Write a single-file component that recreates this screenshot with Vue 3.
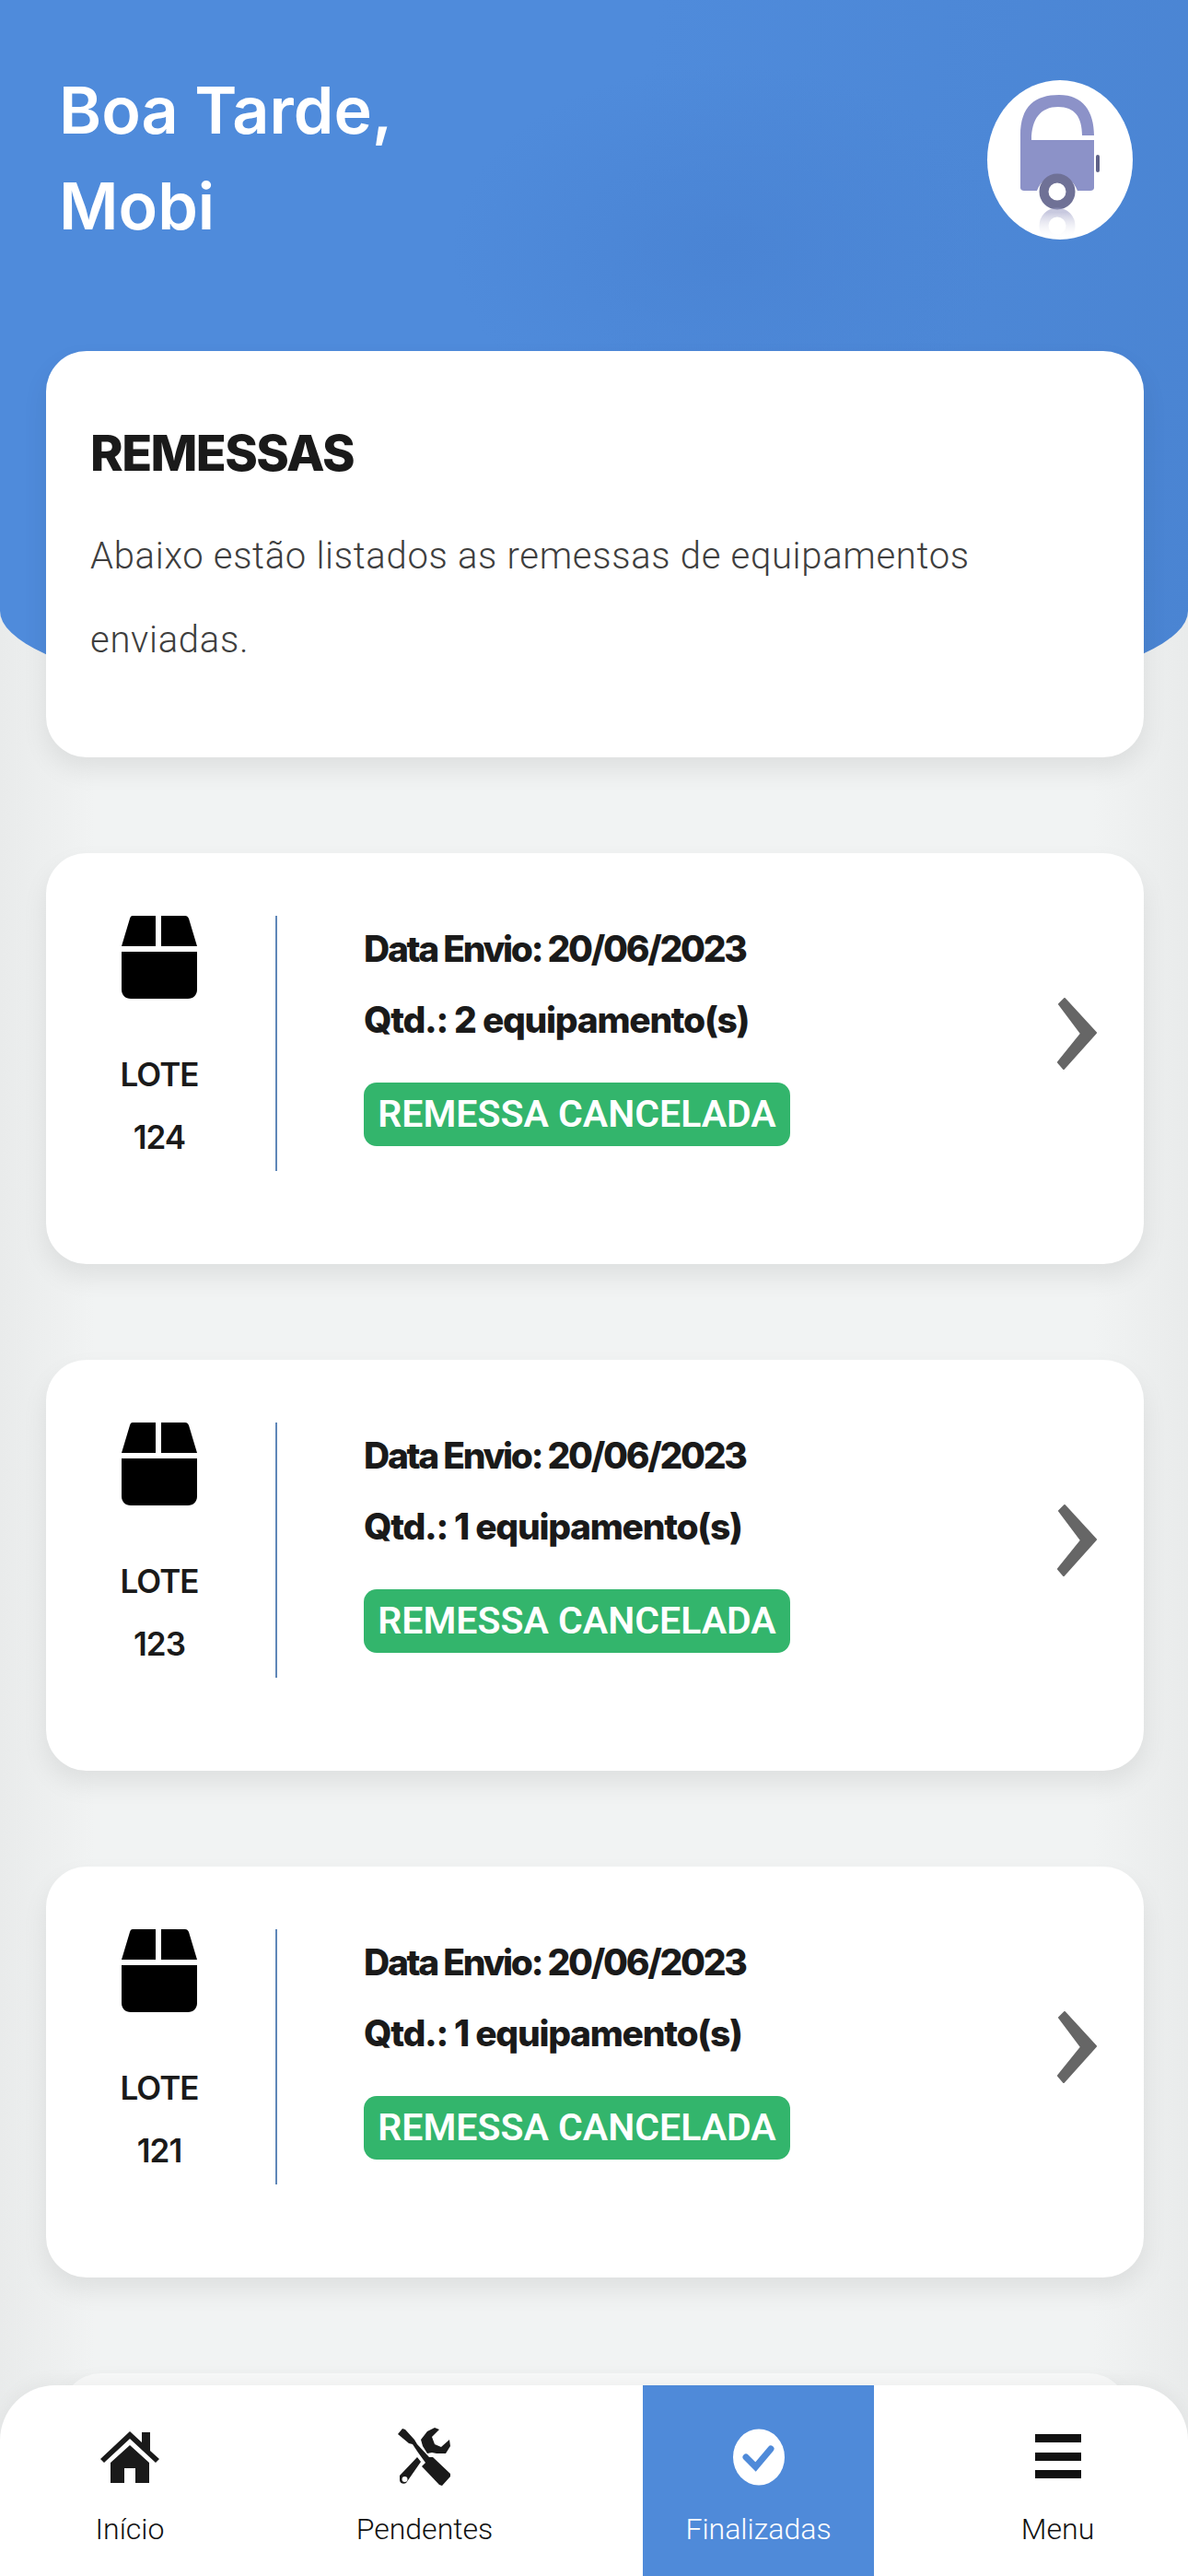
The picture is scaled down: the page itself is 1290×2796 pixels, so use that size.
<script setup>
const remessas = [
  { lote: 124, qtd: 2 },
  { lote: 123, qtd: 1 },
  { lote: 121, qtd: 1 },
]
</script>

<template>
  <div class="page">
    <header class="hero">
      <h1>Boa Tarde,<br />Mobi</h1>
      <div class="avatar">
        <svg viewBox="0 0 158 173" width="158" height="173">
          <defs>
            <linearGradient id="fade" x1="0" y1="0" x2="0" y2="1">
              <stop offset="0" stop-color="#9a9cc4" stop-opacity="0.55" />
              <stop offset="1" stop-color="#ffffff" stop-opacity="0" />
            </linearGradient>
          </defs>
          <path d="M36 60C36 28 52 16 78 16C104 16 116 34 116 60H103C103 40 95 29 77 29C58 29 48 42 48 65H116V117C116 119 114 120 112 120H98C90 98 62 98 54 120H40C38 120 36 119 36 117Z" fill="#8c92c8" />
          <rect x="118" y="81" width="4" height="19" rx="2" fill="#5f6288" />
          <circle cx="76" cy="121" r="14.500" fill="#fff" stroke="#6f7196" stroke-width="10" />
          <circle cx="76" cy="158" r="14.500" fill="none" stroke="url(#fade)" stroke-width="10" />
        </svg>
      </div>
    </header>

    <main class="content">
      <section class="card intro">
        <h2>REMESSAS</h2>
        <p>Abaixo estão listados as remessas de equipamentos enviadas.</p>
      </section>

      <article v-for="r in remessas" :key="r.lote" class="card item">
        <div class="lote">
          <svg class="box" viewBox="0 0 82 90" width="82" height="90">
            <path d="M12 0H37V33H0L9 3C9.500 1 10.500 0 12 0ZM43 0H69C71 0 72 1 73 3L82 33H43ZM0 39H82V80C82 86 78 90 72 90H10C4 90 0 86 0 80Z" fill="#000" />
          </svg>
          <span class="lote-label">LOTE</span>
          <span class="lote-num">{{ r.lote }}</span>
        </div>
        <div class="info">
          <p class="data">Data Envio: 20/06/2023</p>
          <p class="qtd">Qtd.: {{ r.qtd }} equipamento(s)</p>
          <span class="badge">REMESSA CANCELADA</span>
        </div>
        <svg class="chevron" viewBox="0 0 44 78" width="44" height="78">
          <path d="M2 7L8 1L42 38L7 77L1 70L26 39Z" fill="#666" stroke="#666" stroke-width="2" stroke-linejoin="round" />
        </svg>
      </article>

      <section class="card peek"></section>
    </main>

    <nav class="tabs">
      <a class="tab">
        <svg viewBox="0 0 64 56" width="64" height="56">
          <path d="M32 0L45 12V1H54V21L64 30L60 34L32 8L4 34L0 30Z" fill="#1a1a1a" />
          <path d="M32 15L53 34V56H38V40H26V56H11V34Z" fill="#1a1a1a" />
        </svg>
        <span>Início</span>
      </a>
      <a class="tab">
        <svg viewBox="0 0 58 64" width="58" height="64">
          <path d="M5 1L0 7L12 17L16 18L22 27L30 38L26 42L45 62L48 63L57 53V50L38 32H34L21 18L18 13L8 2Z" fill="#1a1a1a" />
          <path d="M45 2L37 10L40 18L47 21L56 13L57 20L52 28H42L37 27L32 28L27 20L25 13L32 4L40 0Z" fill="#1a1a1a" />
          <path d="M21 32L25 37L9 60C6 62 2 60 2 57V52ZM7.500 53A3 3 0 1 0 7.500 59A3 3 0 1 0 7.500 53Z" fill="#1a1a1a" fill-rule="evenodd" />
        </svg>
        <span>Pendentes</span>
      </a>
      <a class="tab active">
        <svg viewBox="0 0 56 62" width="56" height="62">
          <ellipse cx="28" cy="31" rx="28" ry="30.500" fill="#fff" />
          <path d="M14 31L24.500 41.500L41 22" fill="none" stroke="#4f8ad9" stroke-width="7" stroke-linecap="round" />
        </svg>
        <span>Finalizadas</span>
      </a>
      <a class="tab">
        <svg viewBox="0 0 50 50" width="50" height="50">
          <rect y="0" width="50" height="9" fill="#111" />
          <rect y="20" width="50" height="9" fill="#111" />
          <rect y="39" width="50" height="9" fill="#111" />
        </svg>
        <span>Menu</span>
      </a>
    </nav>
  </div>
</template>

<style>
html, body {
  margin: 0;
  background: #eef0f0;
}
</style>

<style scoped>
.page {
  position: relative;
  width: 1290px;
  height: 2796px;
  overflow: hidden;
  background: linear-gradient(90deg, #e9ebeb 0, #f1f3f3 8%, #f1f3f3 92%, #e9ebeb 100%);
  font-family: "Roboto", sans-serif;
}
.hero {
  display: flex;
  justify-content: space-between;
  align-items: flex-start;
  box-sizing: border-box;
  height: 785px;
  padding: 68px 60px 0 64px;
  background: radial-gradient(ellipse 300px 200px at 790px 270px, #4a84d4, transparent), linear-gradient(100deg, #4f8bdb 0, #4f8bdb 50%, #4a84d2 100%);
  border-radius: 0 0 645px 645px / 0 0 122px 122px;
}
.hero h1 {
  margin: 0;
  color: #fff;
  font-family: "Inter", sans-serif;
  font-size: 70px;
  font-weight: 600;
  line-height: 104px;
}
.avatar {
  width: 158px;
  height: 173px;
  margin-top: 19px;
  border-radius: 50%;
  background: #fff;
}
.avatar svg {
  display: block;
}
.content {
  display: flex;
  flex-direction: column;
  gap: 104px;
  margin-top: -404px;
  padding: 0 48px 0 50px;
}
.card {
  background: #fff;
  border-radius: 44px;
  box-shadow: 0 14px 28px rgba(0, 0, 0, 0.08);
}
.intro {
  box-sizing: border-box;
  height: 441px;
  padding: 81px 48px 0;
}
.intro h2 {
  margin: 0 0 36px;
  color: #1a1a1a;
  font-family: "Inter", sans-serif;
  font-size: 54px;
  font-weight: 800;
  line-height: 60px;
  letter-spacing: -1.6px;
}
.intro p {
  margin: 0;
  color: #3e3e3e;
  font-size: 40px;
  font-weight: 300;
  line-height: 91px;
  letter-spacing: 0.7px;
}
.item {
  display: flex;
  align-items: flex-start;
  box-sizing: border-box;
  height: 446px;
  padding: 68px 50px 0 82px;
}
.lote {
  display: flex;
  flex-direction: column;
  align-items: center;
  width: 82px;
  padding-right: 85px;
  height: 277px;
  border-right: 2px solid #5f87b8;
  color: #1a1a1a;
  font-family: "Inter", sans-serif;
  font-size: 35px;
  font-weight: 600;
}
.box {
  display: block;
  margin-bottom: 60px;
}
.lote-label {
  line-height: 44px;
  letter-spacing: -1px;
}
.lote-num {
  margin-top: 24px;
  line-height: 44px;
  letter-spacing: -1px;
}
.info {
  flex: 1;
  padding: 12px 0 0 94px;
}
.info p {
  margin: 0 0 29px;
  color: #1a1a1a;
  font-family: "Inter", sans-serif;
  font-size: 39px;
  font-weight: 800;
  line-height: 48px;
}
.data {
  letter-spacing: -2.3px;
}
.qtd {
  letter-spacing: -1.3px;
}
.badge {
  display: block;
  margin-top: 44px;
  width: 463px;
  height: 69px;
  border-radius: 14px;
  background: #33b56c;
  color: #fff;
  font-size: 41px;
  font-weight: 600;
  line-height: 69px;
  text-align: center;
  white-space: nowrap;
}
.chevron {
  display: block;
  margin-top: 89px;
}
.peek {
  height: 300px;
  margin: 0 16px;
  background: #f8f9f9;
}
.tabs {
  position: absolute;
  left: 0;
  right: 0;
  bottom: 0;
  display: grid;
  grid-template-columns: 282px 358px 367px 283px;
  height: 207px;
  overflow: hidden;
  border-radius: 60px 60px 0 0;
  background: #fff;
  box-shadow: 0 -6px 18px rgba(0, 0, 0, 0.04);
}
.tab {
  display: flex;
  flex-direction: column;
  align-items: center;
  justify-content: flex-start;
  box-sizing: border-box;
  height: 207px;
  padding-top: 46px;
  color: #111;
  font-size: 32px;
  font-weight: 300;
}
.tab svg {
  display: block;
  height: 64px;
}
.tab span {
  margin-top: 26px;
  line-height: 40px;
}
.tab.active {
  margin: 0 58px;
  background: #4f8ad9;
  color: #fff;
}
</style>
